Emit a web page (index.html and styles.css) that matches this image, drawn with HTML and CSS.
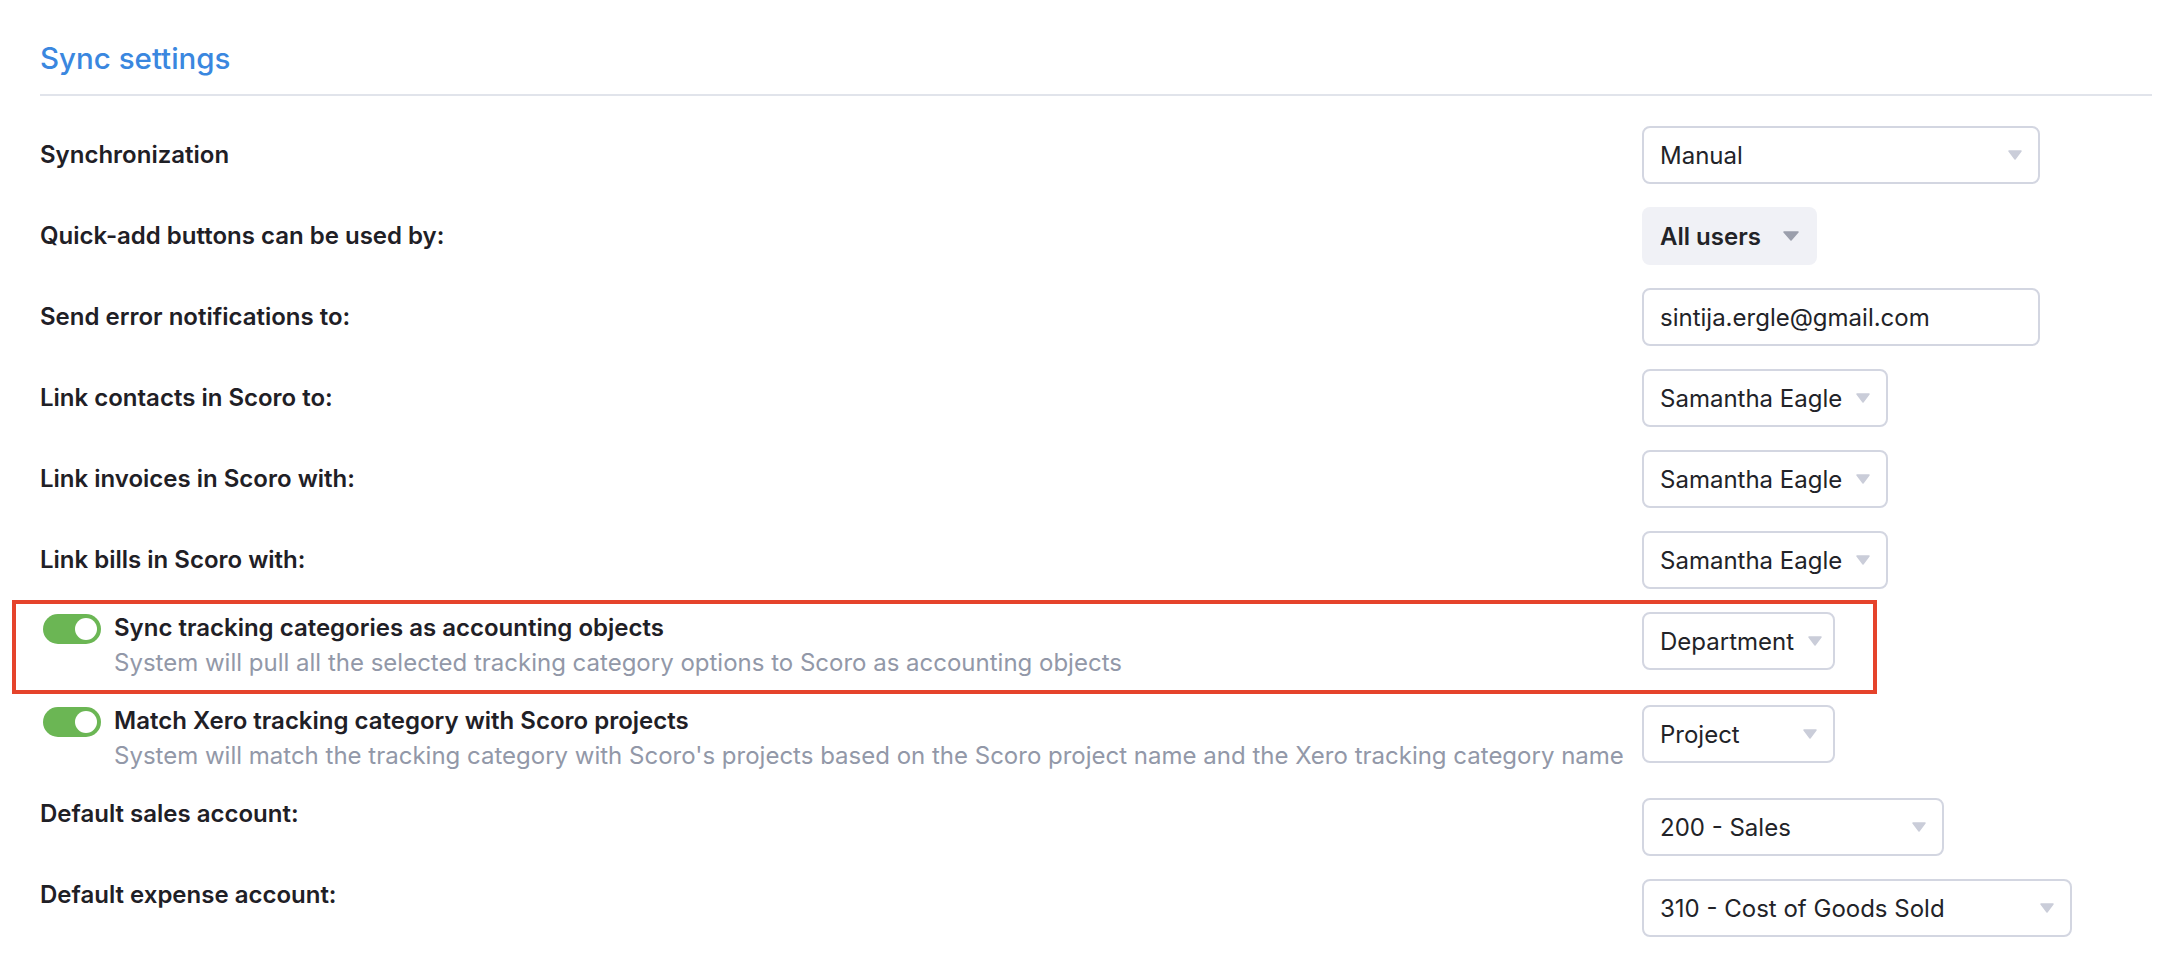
FILE: index.html
```html
<!DOCTYPE html>
<html lang="en">
<head>
    <meta charset="UTF-8">
    <meta name="viewport" content="width=device-width, initial-scale=1.0">
    <title>Sync settings</title>
    <link rel="stylesheet" href="styles.css">
</head>
<body>
    <div class="page">
        <!-- Cabeçalho da secção -->
        <div class="section-header">
            <h2>Sync settings</h2>
        </div>

        <div class="settings">
            <div class="row">
                <div class="label">Synchronization</div>
                <div class="control">
                    <div class="select w-wide">
                        <span>Manual</span>
                        <svg class="caret" width="14" height="10" viewBox="0 0 14 10"><path d="M1 1 H13 L7 9 Z"/></svg>
                    </div>
                </div>
            </div>

            <div class="row">
                <div class="label">Quick-add buttons can be used by:</div>
                <div class="control">
                    <div class="select select-filled">
                        <span>All users</span>
                        <svg class="caret" width="16" height="10" viewBox="0 0 16 10"><path d="M1 1 H15 L8 9 Z"/></svg>
                    </div>
                </div>
            </div>

            <div class="row">
                <div class="label">Send error notifications to:</div>
                <div class="control">
                    <div class="input w-wide">sintija.ergle@gmail.com</div>
                </div>
            </div>

            <div class="row">
                <div class="label">Link contacts in Scoro to:</div>
                <div class="control">
                    <div class="select">
                        <span>Samantha Eagle</span>
                        <svg class="caret" width="14" height="10" viewBox="0 0 14 10"><path d="M1 1 H13 L7 9 Z"/></svg>
                    </div>
                </div>
            </div>

            <div class="row">
                <div class="label">Link invoices in Scoro with:</div>
                <div class="control">
                    <div class="select">
                        <span>Samantha Eagle</span>
                        <svg class="caret" width="14" height="10" viewBox="0 0 14 10"><path d="M1 1 H13 L7 9 Z"/></svg>
                    </div>
                </div>
            </div>

            <div class="row">
                <div class="label">Link bills in Scoro with:</div>
                <div class="control">
                    <div class="select">
                        <span>Samantha Eagle</span>
                        <svg class="caret" width="14" height="10" viewBox="0 0 14 10"><path d="M1 1 H13 L7 9 Z"/></svg>
                    </div>
                </div>
            </div>

            <!-- Linha destacada com a caixa vermelha -->
            <div class="row row-top row-toggle row-highlighted">
                <div class="toggle-label">
                    <span class="toggle on"><span class="knob"></span></span>
                    <div class="toggle-text">
                        <div class="toggle-title">Sync tracking categories as accounting objects</div>
                        <div class="toggle-desc">System will pull all the selected tracking category options to Scoro as accounting objects</div>
                    </div>
                </div>
                <div class="control">
                    <div class="select w-cat">
                        <span>Department</span>
                        <svg class="caret" width="14" height="10" viewBox="0 0 14 10"><path d="M1 1 H13 L7 9 Z"/></svg>
                    </div>
                </div>
                <div class="highlight"></div>
            </div>

            <div class="row row-top row-toggle">
                <div class="toggle-label">
                    <span class="toggle on"><span class="knob"></span></span>
                    <div class="toggle-text">
                        <div class="toggle-title">Match Xero tracking category with Scoro projects</div>
                        <div class="toggle-desc">System will match the tracking category with Scoro's projects based on the Scoro project name and the Xero tracking category name</div>
                    </div>
                </div>
                <div class="control">
                    <div class="select w-cat">
                        <span>Project</span>
                        <svg class="caret" width="14" height="10" viewBox="0 0 14 10"><path d="M1 1 H13 L7 9 Z"/></svg>
                    </div>
                </div>
            </div>

            <div class="row row-top">
                <div class="label">Default sales account:</div>
                <div class="control">
                    <div class="select w-sales">
                        <span>200 - Sales</span>
                        <svg class="caret" width="14" height="10" viewBox="0 0 14 10"><path d="M1 1 H13 L7 9 Z"/></svg>
                    </div>
                </div>
            </div>

            <div class="row row-top">
                <div class="label">Default expense account:</div>
                <div class="control">
                    <div class="select w-expense">
                        <span>310 - Cost of Goods Sold</span>
                        <svg class="caret" width="14" height="10" viewBox="0 0 14 10"><path d="M1 1 H13 L7 9 Z"/></svg>
                    </div>
                </div>
            </div>
        </div>
    </div>
</body>
</html>
```

FILE: styles.css
```css
body {
    font-family: 'Inter', 'Liberation Sans', sans-serif;
    margin: 0;
    padding: 0;
    background-color: white;
    color: #1f2026;
}

.page {
    padding: 0 28px 0 40px;
}

.section-header {
    padding: 40px 0 18px;
    border-bottom: 2px solid #e1e4eb;
}

.section-header h2 {
    margin: 0;
    font-size: 29.5px;
    line-height: 36px;
    font-weight: 500;
    color: #3a87df;
}

.settings {
    padding-top: 30px;
    display: flex;
    flex-direction: column;
    gap: 23px;
}

.row {
    display: grid;
    grid-template-columns: 1fr 510px;
    align-items: center;
}

.row-top {
    align-items: start;
}

.row-toggle {
    padding-bottom: 3px;
}

.row-highlighted {
    position: relative;
}

.label {
    font-size: 24px;
    line-height: 32px;
    font-weight: 600;
}

/* caixa de anotação vermelha */
.highlight {
    position: absolute;
    top: -12px;
    bottom: -12px;
    left: -28px;
    width: 1865px;
    border: 4px solid #e5432b;
    box-sizing: border-box;
    pointer-events: none;
}

.toggle-label {
    display: flex;
    align-items: flex-start;
    gap: 13px;
    padding-left: 3px;
}

.toggle {
    flex: 0 0 auto;
    width: 58px;
    height: 30px;
    border-radius: 15px;
    background-color: #6bb654;
    margin-top: 2px;
    position: relative;
}

.toggle .knob {
    position: absolute;
    top: 4px;
    right: 4px;
    width: 22px;
    height: 22px;
    border-radius: 50%;
    background-color: white;
}

.toggle-title {
    font-size: 24px;
    line-height: 32px;
    font-weight: 600;
}

.toggle-desc {
    font-size: 24px;
    line-height: 32px;
    margin-top: 3px;
    color: #9298a8;
}

.control {
    display: flex;
}

.select,
.input {
    box-sizing: border-box;
    height: 58px;
    border: 2px solid #d3d6e1;
    border-radius: 8px;
    padding: 0 16px;
    display: flex;
    align-items: center;
    gap: 14px;
    font-size: 24px;
    color: #222328;
    background-color: white;
}

.select span {
    flex: 1;
    white-space: nowrap;
}

.caret {
    flex: 0 0 auto;
    fill: #cacdd9;
    stroke: #cacdd9;
    stroke-width: 1.5;
    stroke-linejoin: round;
}

.select-filled {
    border: none;
    background-color: #f0f1f6;
    font-weight: 600;
    padding: 0 18px;
    gap: 22px;
}

.select-filled .caret {
    fill: #9b9fac;
    stroke: #9b9fac;
}

.w-wide {
    width: 398px;
}

.w-cat {
    width: 193px;
}

.w-sales {
    width: 302px;
}

.w-expense {
    width: 430px;
}
```
